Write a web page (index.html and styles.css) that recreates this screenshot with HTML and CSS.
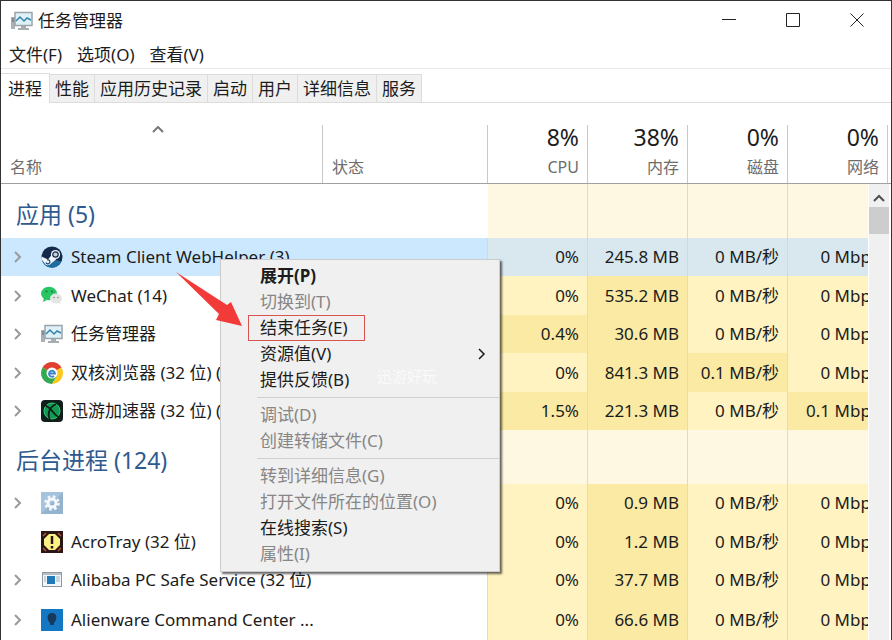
FILE: index.html
```html
<!DOCTYPE html>
<html lang="zh-CN">
  <head>
    <meta charset="utf-8">
    <meta name="viewport" content="width=device-width,initial-scale=1.0">
    <title>任务管理器</title>
    <link rel="stylesheet" href="styles.css">
  </head>
  <body>
    <!-- shared icons -->
    <svg class="defs" width="0" height="0">
      <symbol id="taskmgr" viewBox="0 0 22 20">
        <rect x="0" y="6" width="4" height="12" fill="#aab1b6" />
        <path d="M1 8h2M1 10h2" stroke="#5d666c" />
        <rect x="4" y="1.500" width="17" height="13" fill="#dff1f8" stroke="#9aa5ab" stroke-width="1.500" />
        <path d="M5 10l4-4 4 4 3-3 4 2" fill="none" stroke="#3585ad" stroke-width="1.500" />
        <path d="M10 15h5v2h3v2H7v-2h3z" fill="#a5adb2" />
      </symbol>
      <symbol id="chevron" viewBox="0 0 10 14">
        <path d="M2 2l5 5-5 5" fill="none" stroke="currentColor" />
      </symbol>
    </svg>

    <div class="window">
      <header class="titlebar">
        <svg class="app-icon"><use href="#taskmgr" /></svg>
        <h1>任务管理器</h1>
        <div class="window-btns">
          <button aria-label="最小化"><svg viewBox="0 0 14 14"><path d="M0 6.500h14" /></svg></button>
          <button aria-label="最大化"><svg viewBox="0 0 14 14"><path d="M.5.5h13v13H.5z" /></svg></button>
          <button aria-label="关闭"><svg viewBox="0 0 14 14"><path d="M.5.5l13 13M13.500.5l-13 13" /></svg></button>
        </div>
      </header>

      <nav class="menubar">
        <button>文件(F)</button>
        <button>选项(O)</button>
        <button>查看(V)</button>
      </nav>

      <div class="tabs">
        <button class="tab active">进程</button>
        <button class="tab">性能</button>
        <button class="tab">应用历史记录</button>
        <button class="tab">启动</button>
        <button class="tab">用户</button>
        <button class="tab">详细信息</button>
        <button class="tab">服务</button>
      </div>

      <main class="processes">
        <table>
          <colgroup>
            <col><col class="col-status"><col class="col-num"><col class="col-num"><col class="col-num"><col class="col-num"><col class="col-end">
          </colgroup>
          <thead>
            <tr>
              <th class="name"><svg class="sort" viewBox="0 0 12 7"><path d="M1 6l5-5 5 5" /></svg>名称</th>
              <th class="status">状态</th>
              <th><b>8%</b>CPU</th>
              <th><b>38%</b>内存</th>
              <th><b>0%</b>磁盘</th>
              <th><b>0%</b>网络</th>
              <th></th>
            </tr>
          </thead>
          <tbody>
            <tr class="group"><th colspan="2">应用 (5)</th><td></td><td></td><td></td><td></td><td></td></tr>
            <tr class="selected">
              <td colspan="2"><div class="proc"><svg class="arrow"><use href="#chevron" /></svg>
                <svg class="icon" viewBox="0 0 22 22"><circle cx="11" cy="11" r="10.500" fill="#15294b" /><path d="M1 14.500a10.500 10.500 0 0 0 19.500 1L11 13z" fill="#1f6c9e" /><path d="M0.500 10.500l6.500 3 4-5 4 5-5 4a3.600 3.600 0 0 1-6.500-.5L1 14z" fill="#f1f5f8" /><circle cx="14.500" cy="8.500" r="4.600" fill="#f1f5f8" /><circle cx="14.500" cy="8.500" r="2.700" fill="#c3d2df" stroke="#15294b" stroke-width="1.200" /><path d="M5 16.500a2 2 0 1 0 1-2.500" fill="none" stroke="#1f4b73" stroke-width="1.200" /></svg>
                <span>Steam Client WebHelper (3)</span></div></td>
              <td>0%</td><td>245.8 MB</td><td>0 MB/秒</td><td>0 Mbps</td><td></td>
            </tr>
            <tr>
              <td colspan="2"><div class="proc"><svg class="arrow"><use href="#chevron" /></svg>
                <svg class="icon" viewBox="0 0 22 22"><path d="M3 13l-1 4 4-2z" fill="#27c663" /><ellipse cx="8" cy="8.500" rx="8" ry="6.800" fill="#27c663" /><circle cx="5.500" cy="6.500" r="1" fill="#137a3a" /><circle cx="11" cy="6.500" r="1" fill="#137a3a" /><ellipse cx="15" cy="13.500" rx="6" ry="5" fill="#e4e6e4" /><path d="M17 17l3 3-1-4z" fill="#e4e6e4" /><circle cx="13" cy="12.500" r=".8" fill="#888" /><circle cx="17" cy="12.500" r=".8" fill="#888" /></svg>
                <span>WeChat (14)</span></div></td>
              <td>0%</td><td class="mid">535.2 MB</td><td>0 MB/秒</td><td>0 Mbps</td><td></td>
            </tr>
            <tr>
              <td colspan="2"><div class="proc"><svg class="arrow"><use href="#chevron" /></svg>
                <svg class="icon"><use href="#taskmgr" /></svg>
                <span>任务管理器</span></div></td>
              <td class="mid">0.4%</td><td class="mid">30.6 MB</td><td>0 MB/秒</td><td>0 Mbps</td><td></td>
            </tr>
            <tr>
              <td colspan="2"><div class="proc"><svg class="arrow"><use href="#chevron" /></svg>
                <svg class="icon" viewBox="0 0 22 22"><path d="M11 11L1.500 5.500A11 11 0 0 1 20.500 5.500z" fill="#e0402f" /><path d="M11 11L1.500 5.500A11 11 0 0 0 11 22l5-8z" fill="#35a852" /><path d="M11 11l9.500-5.500A11 11 0 0 1 11 22l5-8z" fill="#fbc916" /><circle cx="11" cy="11" r="5.500" fill="#fff" /><path d="M8 11.500h6a3 3 0 1 0-1 2.500" fill="none" stroke="#3b83c8" stroke-width="1.800" /></svg>
                <span>双核浏览器 (32 位) (7)</span></div></td>
              <td>0%</td><td class="mid">841.3 MB</td><td class="mid">0.1 MB/秒</td><td>0 Mbps</td><td></td>
            </tr>
            <tr>
              <td colspan="2"><div class="proc"><svg class="arrow"><use href="#chevron" /></svg>
                <svg class="icon" viewBox="0 0 22 22"><rect width="22" height="22" rx="4" fill="#101f19" /><circle cx="11" cy="11" r="8" fill="#139a50" stroke="#32c878" /><path d="M4 5q5 3 8 7t6 5M15 4q-6 3-7 8t1 7" fill="none" stroke="#101f19" stroke-width="1.800" /></svg>
                <span>迅游加速器 (32 位) (3)</span></div></td>
              <td class="mid">1.5%</td><td class="mid">221.3 MB</td><td>0 MB/秒</td><td class="mid">0.1 Mbps</td><td></td>
            </tr>
          </tbody>
          <tbody>
            <tr class="group"><th colspan="2">后台进程 (124)</th><td></td><td></td><td></td><td></td><td></td></tr>
            <tr>
              <td colspan="2"><div class="proc"><svg class="arrow"><use href="#chevron" /></svg>
                <svg class="icon" viewBox="0 0 22 22"><rect width="22" height="22" fill="#a5c3dd" /><path d="M0 22L22 0v22z" fill="#93b3cf" /><circle cx="11" cy="11" r="6.500" fill="none" stroke="#f5f9fc" stroke-width="2.500" stroke-dasharray="2.600 2.500" /><circle cx="11" cy="11" r="4" fill="none" stroke="#f5f9fc" stroke-width="3" /></svg>
                </div></td>
              <td>0%</td><td class="mid">0.9 MB</td><td>0 MB/秒</td><td>0 Mbps</td><td></td>
            </tr>
            <tr>
              <td colspan="2"><div class="proc"><span class="arrow"></span>
                <svg class="icon" viewBox="0 0 22 22"><rect width="22" height="22" fill="#2a1614" /><path d="M2 5l3-3M17 2l3 3M2 17l3 3M17 20l3-3" stroke="#b9542d" stroke-width="1.500" /><path d="M8 3h6l5 5v6l-5 5H8l-5-5V8z" fill="#fbf184" /><path d="M11 5v8M11 15v2.500" stroke="#2a1614" stroke-width="2.500" /></svg>
                <span>AcroTray (32 位)</span></div></td>
              <td>0%</td><td class="mid">1.2 MB</td><td>0 MB/秒</td><td>0 Mbps</td><td></td>
            </tr>
            <tr>
              <td colspan="2"><div class="proc"><svg class="arrow"><use href="#chevron" /></svg>
                <svg class="icon" viewBox="0 0 22 22"><rect x="1.500" y="3.500" width="19" height="14" fill="#f2f5f7" stroke="#8d999f" /><path d="M2 5h18" stroke="#b4c0c6" stroke-width="2" /><rect x="6" y="7" width="8" height="8" fill="#1f78b8" /><path d="M3 8h2M3 10h2M3 12h2M15 8h4M15 10h4M15 12h4" stroke="#9db6c5" /></svg>
                <span>Alibaba PC Safe Service (32 位)</span></div></td>
              <td>0%</td><td class="mid">37.7 MB</td><td>0 MB/秒</td><td>0 Mbps</td><td></td>
            </tr>
            <tr>
              <td colspan="2"><div class="proc"><svg class="arrow"><use href="#chevron" /></svg>
                <svg class="icon" viewBox="0 0 22 22"><rect width="22" height="22" fill="#1477c3" /><path d="M11 4c6 0 5 7 2 10v2H9v-2C6 11 5 4 11 4z" fill="#173a5c" /></svg>
                <span>Alienware Command Center ...</span></div></td>
              <td>0%</td><td class="mid">66.6 MB</td><td>0 MB/秒</td><td>0 Mbps</td><td></td>
            </tr>
          </tbody>
        </table>
        <div class="scrollbar">
          <button aria-label="向上滚动"><svg viewBox="0 0 12 8"><path d="M1 7l5-5 5 5" /></svg></button>
          <div class="thumb"></div>
        </div>
      </main>
    </div>

    <!-- right click menu for the selected process -->
    <div class="context-menu">
      <button class="default">展开(P)</button>
      <button disabled>切换到(T)</button>
      <button class="marked">结束任务(E)</button>
      <button>资源值(V)<svg class="more"><use href="#chevron" /></svg></button>
      <button>提供反馈(B)</button>
      <hr>
      <button disabled>调试(D)</button>
      <button disabled>创建转储文件(C)</button>
      <hr>
      <button disabled>转到详细信息(G)</button>
      <button disabled>打开文件所在的位置(O)</button>
      <button>在线搜索(S)</button>
      <button disabled>属性(I)</button>
      <span class="watermark">迅游好玩</span>
    </div>

    <svg class="pointer" viewBox="0 0 68 58"><path d="M0 0L51 33 55 30 66 54 40 48 43 42Z" /></svg>
  </body>
</html>
```
FILE: styles.css
```css
* { box-sizing: border-box; }
body { margin: 0; overflow: hidden; color: #1c1c1c; background: #fff; font-family: "Noto Sans", "Noto Sans CJK SC", sans-serif; font-size: 17px; line-height: 24px; }
button { margin: 0; padding: 0; border: none; background: none; color: inherit; font: inherit; }
.defs { position: absolute; }

.window { display: flex; flex-direction: column; height: 100vh; border: 1px solid #333; border-bottom: none; }

/* title bar, menus */
.titlebar { display: flex; align-items: center; height: 40px; padding-left: 10px; }
.titlebar h1 { flex: 1; margin: 0 0 0 5px; font-size: 17px; font-weight: normal; }
.app-icon { width: 22px; height: 20px; }
.window-btns { display: flex; align-self: flex-start; padding-right: 2px; }
.window-btns button { display: flex; align-items: center; justify-content: center; width: 64px; height: 38px; }
.window-btns svg { width: 14px; height: 14px; fill: none; stroke: #222; }
.menubar { display: flex; gap: 15px; height: 28px; padding-left: 8px; border-bottom: 1px solid #e8e8e8; }
.tabs { display: flex; align-items: flex-end; height: 34px; padding-top: 4px; border-bottom: 1px solid #dcdcdc; }
.tab { height: 28px; padding: 0 5px; border: 1px solid #dcdcdc; border-left: none; border-bottom: none; background: #f0f0f0; }
.tab.active { height: 30px; padding: 0 7px; background: #fff; margin-bottom: -1px; }

/* process list */
.processes { position: relative; flex: 1; overflow: hidden; }
table { width: 100%; table-layout: fixed; border-collapse: separate; border-spacing: 0; }
.col-status { width: 165px; }
.col-num { width: 100px; }
.col-end { width: 3px; }
th, td { padding: 0; font-weight: normal; text-align: right; white-space: nowrap; }
thead th { height: 81px; padding: 0 9px 4px; border-bottom: 1px solid #a0a0a0; background: linear-gradient(#c8c8c8, #c8c8c8) right bottom / 1px 58px no-repeat; color: #6d6d6d; font-size: 16px; vertical-align: bottom; }
thead th:last-child { padding: 0; background: none; }
thead b { display: block; margin-bottom: 4px; color: #1c1c1c; font-size: 23px; font-weight: normal; line-height: 28px; }
thead .name, thead .status { text-align: left; }
thead .name { padding-right: 18px; }
.sort { display: block; width: 12px; height: 7px; margin: 0 auto 22px; fill: none; stroke: #777; stroke-width: 2; }
tbody tr { height: 38px; }
tbody tr:nth-child(odd) { height: 39px; }
tbody tr.group { height: 54px; }
tbody:last-child tr:last-child { height: 41px; }
tbody .group th { padding: 6px 15px 0; color: #2f5a8f; font-size: 23px; text-align: left; }
tbody td { padding-right: 8px; border-right: 1px solid #e6dcb4; background: #fff3c1; }
tbody .mid { background: #faeaa4; }
tbody .group td { background: #fef8e2; }
tbody td:first-child { padding: 0; background: none; }
tbody td:last-child { padding: 0; border: none; }
tbody .selected td { background: #d8e8ee; border-color: #c8dce2; }
tbody .selected td:first-child { background: #cce8ff; }
.proc { display: flex; align-items: center; padding-left: 12px; }
.arrow { width: 10px; height: 14px; color: #9a9a9a; stroke-width: 2; }
.icon { width: 22px; height: 22px; margin: 0 8px 0 18px; }

.scrollbar { position: absolute; top: 81px; right: 0; bottom: 0; width: 23px; border: solid #fff; border-width: 0 2px 0 1px; background: #f0f0f0; }
.scrollbar button { display: block; width: 100%; height: 23px; }
.scrollbar svg { width: 12px; height: 8px; fill: none; stroke: #505050; stroke-width: 2; }
.thumb { height: 27px; background: #cdcdcd; }

/* context menu */
.context-menu { position: absolute; left: 220px; top: 259px; width: 280px; padding: 3px 0 4px; border: 1px solid #ccc; background: #f0f0f0; box-shadow: 2px 2px 2px rgba(0, 0, 0, 0.6); }
.context-menu button { display: flex; align-items: center; width: 100%; height: 26px; padding: 0 12px 0 39px; text-align: left; }
.context-menu button:disabled { color: #868686; }
.context-menu .default { font-weight: bold; }
.context-menu .marked { width: 117px; margin-left: 27px; padding-left: 11px; border: 1px solid #d9534f; }
.context-menu hr { margin: 4px 0 4px 36px; border: none; border-top: 1px solid #d0d0d0; }
.more { width: 10px; height: 14px; margin-left: auto; stroke-width: 1.5; }
.watermark { position: absolute; left: 156px; top: 104px; color: #fafafa; font-size: 15px; }
.pointer { position: absolute; left: 176px; top: 272px; width: 68px; height: 58px; fill: #f23b39; }
```
